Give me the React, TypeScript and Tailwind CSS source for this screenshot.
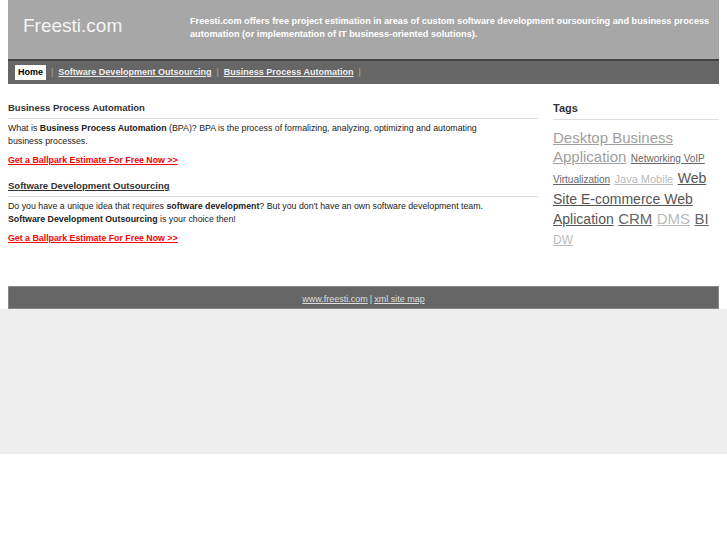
import React from "react";

const tags: { t: string; s: number; c: string }[] = [
  { t: "Desktop Business Application", s: 15, c: "#a0a0a0" },
  { t: "Networking VoIP", s: 10, c: "#666666" },
  { t: "Virtualization", s: 10, c: "#666666" },
  { t: "Java Mobile", s: 11, c: "#bbbbbb" },
  { t: "Web Site E-commerce Web Aplication", s: 14, c: "#555555" },
  { t: "CRM", s: 15, c: "#666666" },
  { t: "DMS", s: 15, c: "#bbbbbb" },
  { t: "BI", s: 15, c: "#666666" },
  { t: "DW", s: 12, c: "#bbbbbb" },
];

export default function App() {
  return (
    <div className="bg-white min-h-[545px]" style={{ fontFamily: '"Liberation Sans", Arial, sans-serif' }}>
      <div className="mx-[8px] w-[711px]">
        {/* header */}
        <div className="h-[59px] bg-[#a7a7a7] flex items-start">
          <div className="w-[182px] shrink-0 pl-[15px] pt-[15px] text-[19px] leading-[22px] text-[#f4f4f4]">Freesti.com</div>
          <div className="w-[522px] pt-[15px] text-[9.2px] leading-[13px] font-bold text-white">
            Freesti.com offers free project estimation in areas of custom software development oursourcing and business process automation (or implementation of IT business-oriented solutions).
          </div>
        </div>
        {/* nav */}
        <div className="h-[25px] bg-[#666666] border-t-2 border-[#444444] flex items-center pl-[7px] text-[9px] font-bold">
          <span className="bg-white text-black px-[3px] py-[2px] leading-[11px]">Home</span>
          <span className="text-[#aaaaaa] font-normal mx-[5px]">|</span>
          <a className="text-[#eeeeee] underline">Software Development Outsourcing</a>
          <span className="text-[#aaaaaa] font-normal mx-[5px]">|</span>
          <a className="text-[#eeeeee] underline">Business Process Automation</a>
          <span className="text-[#aaaaaa] font-normal mx-[5px]">|</span>
        </div>
        {/* content */}
        <div className="flex h-[202px]">
          <div className="w-[530px] pt-[17px] text-[#222222]">
            <div className="text-[9.5px] font-bold leading-[13px] text-[#333333] pb-[4px] border-b border-[#dddddd]">Business Process Automation</div>
            <p className="w-[505px] text-[8.8px] leading-[13px] mt-[3px]">
              What is <b>Business Process Automation</b> (BPA)? BPA is the process of formalizing, analyzing, optimizing and automating business processes.
            </p>
            <p className="text-[8.8px] leading-[13px] mt-[6px] font-bold text-[#ff0000] underline">Get a Ballpark Estimate For Free Now &gt;&gt;</p>
            <div className="mt-[12px] text-[9.5px] font-bold leading-[13px] text-[#333333] pb-[4px] border-b border-[#dddddd]">
              <span className="underline">Software Development Outsourcing</span>
            </div>
            <p className="w-[505px] text-[8.8px] leading-[13px] mt-[3px]">
              Do you have a unique idea that requires <b>software development</b>? But you don't have an own software development team. <b>Software Development Outsourcing</b> is your choice then!
            </p>
            <p className="text-[8.8px] leading-[13px] mt-[6px] font-bold text-[#ff0000] underline">Get a Ballpark Estimate For Free Now &gt;&gt;</p>
          </div>
          <div className="ml-[15px] w-[166px] pt-[17px]">
            <div className="text-[11px] font-bold leading-[14px] text-[#333333] pb-[4px] border-b border-[#dddddd]">Tags</div>
            <div className="mt-[8px] leading-[19px]">
              {tags.map((g, i) => (
                <React.Fragment key={i}>
                  <a className="underline" style={{ fontSize: g.s, color: g.c }}>{g.t}</a>{" "}
                </React.Fragment>
              ))}
            </div>
          </div>
        </div>
        {/* footer */}
        <div className="h-[23px] bg-[#666666] border border-[#888888] flex items-center justify-center text-[9px] text-[#dddddd] pt-[4px]">
          <a className="underline">www.freesti.com</a>
          <span className="mx-[2px]">|</span>
          <a className="underline">xml site map</a>
        </div>
      </div>
      <div className="h-[145px] bg-[#eeeeee]" />
    </div>
  );
}
